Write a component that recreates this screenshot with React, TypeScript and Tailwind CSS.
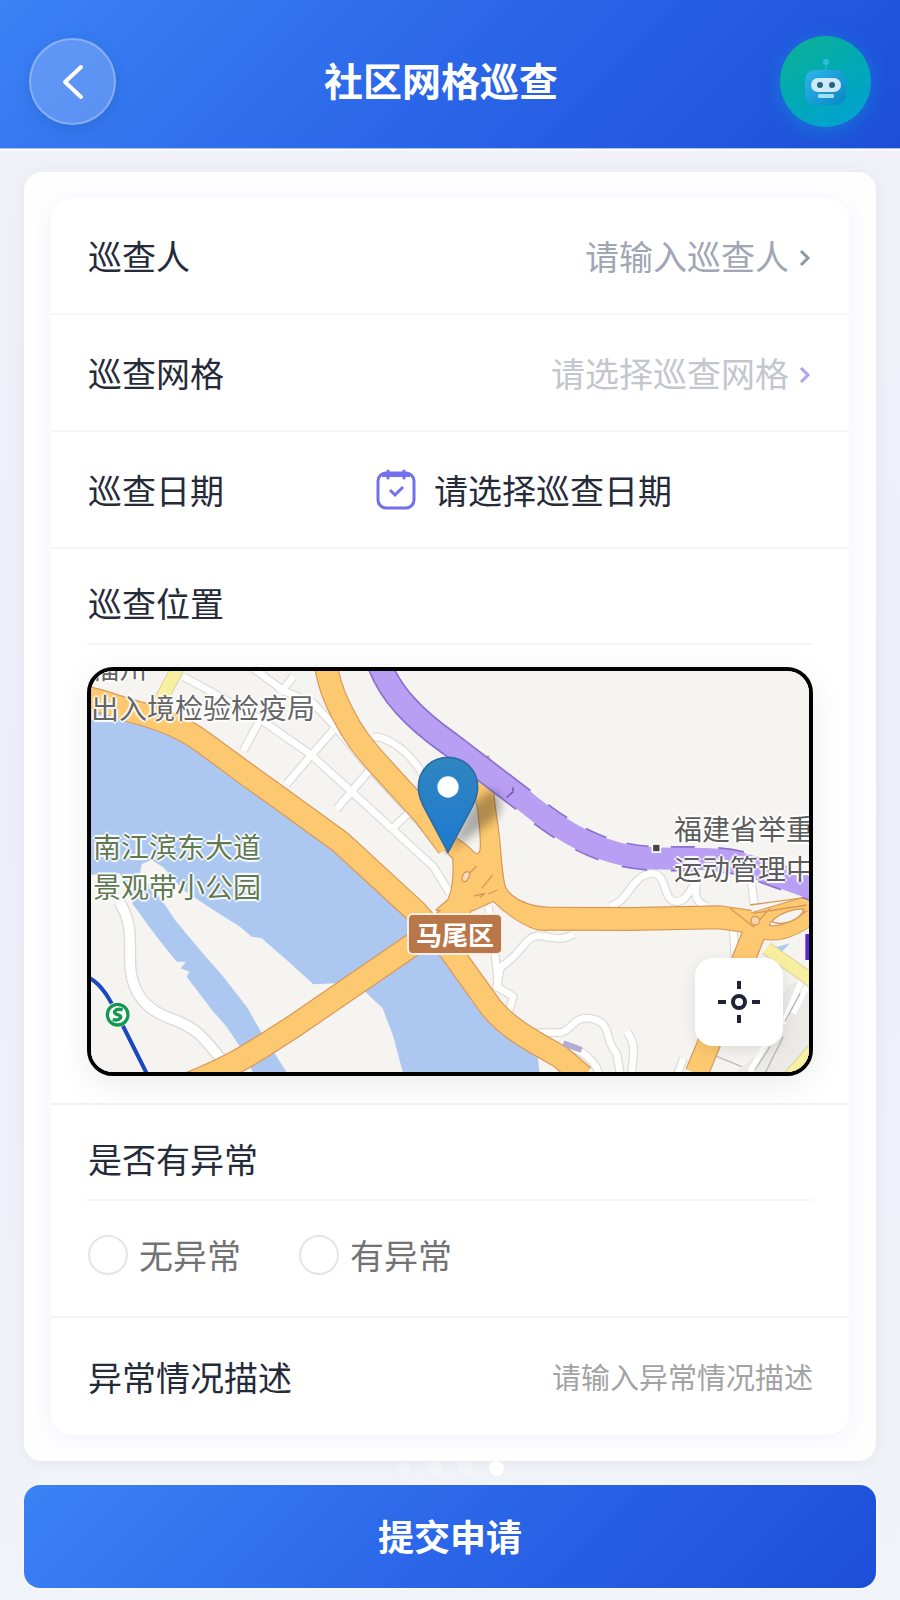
import { ReactNode } from "react";

const Robot = () => (
  <svg viewBox="0 0 46 50" className="h-[50px] w-[46px]" aria-hidden="true">
    <defs>
      <linearGradient id="robotHead" x1="0" y1="0" x2="1" y2="1">
        <stop offset="0" stopColor="#30b4ea" />
        <stop offset="1" stopColor="#0787c4" />
      </linearGradient>
    </defs>
    <path d="M23 6v8" stroke="#22b0d0" strokeWidth="2" />
    <circle cx="23" cy="5" r="3" fill="#2cc0da" />
    <rect x="2" y="13" width="41" height="35" rx="10" fill="url(#robotHead)" />
    <rect x="8" y="21" width="30" height="14" rx="7" fill="#cdeaf9" />
    <circle cx="17" cy="28" r="3" fill="#27627f" />
    <circle cx="29" cy="28" r="3" fill="#27627f" />
    <rect x="15" y="37" width="16" height="4" rx="1" fill="#a5dcf3" />
  </svg>
);

const Calendar = () => (
  <svg viewBox="0 0 42 42" className="size-[42px]" fill="none" stroke="#7370ee" aria-hidden="true">
    <rect x="3" y="4" width="36" height="35" rx="8" strokeWidth="3" />
    <path d="M7 6h28" strokeWidth="4" />
    <path d="M13 2v7M29 2v7" strokeWidth="3" strokeLinecap="round" />
    <path d="M15 21l5 5 8-8" strokeWidth="3" />
  </svg>
);

const Arrow = ({ className }: { className: string }) => (
  <svg viewBox="0 0 12 18" className={`mt-1 mr-0.5 h-[18px] w-3 ${className}`} fill="none" stroke="currentColor" strokeWidth="3" aria-hidden="true">
    <path d="M2 2l7 7-7 7" />
  </svg>
);

const roadA =
  "M10 112C70 122 120 145 180 160C250 180 310 205 355 237C430 290 500 345 570 393L780 545L870 628L1010 757L1110 870L1235 1045C1290 1110 1370 1150 1440 1190L1510 1250";
const roadB = "M330 1270C440 1225 500 1190 570 1145L640 1100L990 860L1100 780L1150 730";
const roadC = "M738 20C748 75 765 120 790 165C820 225 850 262 900 318L1030 460L1105 560";
const roadE = "M1390 776L1650 777L1920 772L2010 785";
const roadF = "M2040 775L1990 900L1850 1240";
const mainRoads = [roadA, roadB, roadC, roadE, roadF];

const junction =
  "M1180 300L1225 290L1240 400C1242 440 1250 470 1255 520C1262 560 1260 620 1274 680C1290 715 1340 740 1400 743V810L1370 807C1330 795 1290 770 1240 722L1180 750H1070L1105 720C1122 680 1122 640 1120 595L1085 560L1110 525C1140 540 1160 555 1180 577Q1196 592 1202 570C1205 540 1200 500 1195 450L1180 380Z";

const streets = [
  "M310 50L530 170L690 282L820 400L940 510L1060 620L1110 700",
  "M520 25L610 92L700 130L770 205L870 325L985 450L1110 580",
  "M640 50L600 100",
  "M540 180L490 272",
  "M760 210L690 290L620 372",
  "M865 335L770 447",
  "M985 460L930 512",
  "M880 230C920 230 990 270 1035 355",
  "M1225 740L1235 800L1250 925L1255 990",
  "M1480 822C1440 850 1400 825 1370 828C1330 835 1320 890 1262 920L1250 980L1300 1010L1285 1060",
  "M1590 740C1650 720 1655 645 1715 640C1765 640 1745 725 1790 725C1830 720 1825 680 1850 675C1840 710 1855 730 1880 740",
  "M2015 665L2022 730",
  "M1960 810L1965 890",
  "M1330 1120L1445 1117C1480 1105 1480 1070 1530 1075C1600 1085 1570 1140 1610 1180L1622 1250",
  "M1640 1115C1675 1160 1655 1190 1655 1250",
  "M1470 1160C1520 1180 1550 1210 1560 1250",
  "M1790 1250L1810 1195",
];

// Drawn at three units to the pixel
const MapDrawing = () => (
  <svg viewBox="33 33 2154 1203" preserveAspectRatio="xMidYMid slice" className="block size-full" aria-hidden="true">
    <defs>
      <linearGradient id="pin" x1="0" y1="0" x2="0" y2="1">
        <stop offset="0" stopColor="#2f86c0" />
        <stop offset="1" stopColor="#1f7ad0" />
      </linearGradient>
      <filter id="soft" x="-30%" y="-30%" width="160%" height="160%">
        <feGaussianBlur stdDeviation="14" />
      </filter>
    </defs>
    <rect width="2300" height="1300" fill="#f5f4f0" />

    {/* river and the islands in it */}
    <path d="M20 120L180 160L355 237L570 393L780 545L1010 757L1130 900L1240 1050L1370 1160L1380 1250H20Z" fill="#adc8f0" />
    <path d="M20 645L120 640L160 735L230 830L290 905L318 905L302 925L328 935L320 950L400 1055L440 1100L480 1160L525 1250H20Z" fill="#f5f4f0" />
    <path d="M180 640L185 612L215 600L250 622L310 690L400 750L480 800L515 830L545 835L620 900L700 973L770 970L850 990L908 1045L940 1130L972 1250H628L540 1110L500 1040L430 950L360 870L285 780L235 705Z" fill="#f5f4f0" />

    {/* blocks at the lower right */}
    <path d="M1950 1250L2060 1160L2120 980L2200 940V1250Z" fill="#ebeae7" />
    <path d="M2010 1235L2075 1120M2110 1090L2165 960M2140 1060L2180 980" fill="none" stroke="#fff" strokeWidth="16" />
    <path d="M2025 1230L2070 1160M1900 1185L1985 1220M2050 1250L2110 1130M2115 1085L2160 1000" fill="none" stroke="#b9b9b9" strokeWidth="4" />
    <path d="M2060 870L2130 850L2100 880Z" fill="#adc8f0" />

    <g fill="none" strokeLinejoin="round">
      {streets.map((d) => (
        <path key={d} d={d} stroke="#dbdad6" strokeWidth="27" />
      ))}
      {streets.map((d) => (
        <path key={d} d={d} stroke="#fff" strokeWidth="20" />
      ))}
      <path d="M118 725C155 785 150 830 150 900C150 1000 200 1050 270 1075C345 1100 370 1130 425 1200" stroke="#dbdad6" strokeWidth="37" />
      <path d="M118 725C155 785 150 830 150 900C150 1000 200 1050 270 1075C345 1100 370 1130 425 1200" stroke="#fff" strokeWidth="29" />
      <path d="M295 20L240 125M2060 865L2200 965M2200 1170L2120 1260" stroke="#d9d2a0" strokeWidth="42" />
      <path d="M295 20L240 125M2060 865L2200 965M2200 1170L2120 1260" stroke="#f8f0a0" strokeWidth="36" />

      {mainRoads.map((d) => (
        <path key={d} d={d} stroke="#d9965a" strokeWidth="72" />
      ))}
      <path d={junction} stroke="#d9965a" strokeWidth="7" />
      <path d="M2000 785L2190 728M2030 810C2080 830 2140 815 2200 765" stroke="#d9965a" strokeWidth="46" />
      {mainRoads.map((d) => (
        <path key={d} d={d} stroke="#fdc970" strokeWidth="65" />
      ))}
      <path d={junction} fill="#fdc970" />
      <path d="M2000 785L2190 728M2030 810C2080 830 2140 815 2200 765" stroke="#fdc970" strokeWidth="40" />
    </g>

    {/* interchanges */}
    <path d="M1170 638L1190 618M1205 685L1238 645M1182 708L1215 700L1200 712M1225 702L1252 690M2010 735L2180 712M2020 760L2180 735M1950 745L2020 800L2070 745" fill="none" stroke="#d9965a" strokeWidth="4" />
    <path d="M1146 660C1146 635 1166 630 1170 640C1168 655 1154 675 1146 660Z" fill="#f7dfc0" stroke="#d9965a" strokeWidth="4" />
    <path d="M2075 785C2100 755 2150 745 2172 748C2160 780 2110 800 2075 785Z" fill="#f5f4f0" stroke="#d9965a" strokeWidth="4" />
    <circle cx="2026" cy="782" r="13" fill="#f6d6a8" stroke="#d9965a" strokeWidth="4" />

    {/* expressway, running into a tunnel */}
    <g fill="none">
      <path d="M897 10C930 100 1000 175 1110 252L1330 420" stroke="#8c70cf" strokeWidth="76" />
      <path d="M1330 420C1450 520 1570 590 1720 595C1830 600 1930 585 2030 625L2210 690" stroke="#8c70cf" strokeWidth="76" strokeDasharray="72 68" strokeDashoffset="72" />
      <path d="M897 10C930 100 1000 175 1110 252L1330 420C1450 520 1570 590 1720 595C1830 600 1930 585 2030 625L2210 690" stroke="#b99ff3" strokeWidth="66" />
      <path d="M1280 412L1300 395M1298 395L1300 382" stroke="#7358b8" strokeWidth="5" />
      <path d="M2183 822V900" stroke="#5a26d8" strokeWidth="14" />
      <path d="M1450 1150L1505 1170" stroke="#b3abd2" strokeWidth="18" />
    </g>

    {/* metro line */}
    <path d="M20 950C70 970 100 1040 120 1080L205 1250" fill="none" stroke="#1a48c0" strokeWidth="12" />
    <circle cx="113" cy="1064" r="38" fill="#fff" />
    <circle cx="113" cy="1064" r="31" fill="#fff" stroke="#12994e" strokeWidth="10" />
    <path d="M128 1049C104 1044 96 1060 113 1064C130 1068 122 1084 98 1079" fill="none" stroke="#12994e" strokeWidth="10" />

    <rect x="1717" y="552" width="24" height="24" fill="#444" stroke="#fff" strokeWidth="5" />

    <path d="M1108 575L1170 440L1230 390C1270 400 1275 450 1240 480Z" fill="#000" opacity=".3" filter="url(#soft)" />
    <path d="M1104 292C1054 292 1015 331 1015 382C1015 410 1026 432 1039 455L1104 577L1169 455C1182 432 1193 410 1193 382C1193 331 1154 292 1104 292Z" fill="url(#pin)" stroke="#2d6da0" strokeWidth="5" />
    <circle cx="1104" cy="381" r="32" fill="#fff" />
  </svg>
);

const halo = "absolute text-[28px] leading-[40px] whitespace-nowrap [text-shadow:-2px_0_1px_#fff,2px_0_1px_#fff,0_-2px_1px_#fff,0_2px_1px_#fff]";

const PatrolMap = () => (
  <div className="relative mt-[22px] h-[409px] overflow-hidden rounded-[26px] border-4 border-black shadow-[0_8px_32px_rgba(0,0,0,0.08)]">
    <MapDrawing />
    <p className={`${halo} -top-6 left-0 text-[#666]`}>
      福州
      <br />
      出入境检验检疫局
    </p>
    <p className={`${halo} top-[155px] left-0.5 text-[#5f7a52]`}>
      南江滨东大道
      <br />
      景观带小公园
    </p>
    <p className={`${halo} top-[137px] left-[583px] text-[#5c5c5c]`}>
      福建省举重
      <br />
      运动管理中心
    </p>
    <span className="absolute top-[242px] left-[316px] rounded-md border-2 border-[#fbeee2] bg-[#b97648] px-[7px] text-[26px] leading-[38px] font-bold text-white">
      马尾区
    </span>
    <button
      type="button"
      aria-label="定位"
      className="absolute right-[26px] bottom-[26px] flex size-[88px] items-center justify-center rounded-[18px] bg-white shadow-[0_4px_16px_rgba(0,0,0,0.1)]"
    >
      <svg viewBox="0 0 44 44" className="size-11" fill="none" stroke="#1e2433" strokeWidth="4">
        <circle cx="22" cy="22" r="6" />
        <path d="M22 1v8M22 35v8M1 22h8M35 22h8" />
      </svg>
    </button>
  </div>
);

const Row = ({ children }: { children: ReactNode }) => (
  <div className="flex h-[117px] items-center border-b-2 border-[#f5f6fb] pr-9 pl-[37px] last:border-b-0">{children}</div>
);

const SectionTitle = ({ children }: { children: ReactNode }) => (
  <h2 className="border-b-2 border-[#f5f6fa] pt-[31px] pb-[17px] pl-px text-[34px] leading-[46px]">{children}</h2>
);

const Choice = ({ label }: { label: string }) => (
  <label className="flex h-10 items-center gap-[11px] text-[34px] leading-10 text-[#737373]">
    <input type="radio" name="abnormal" className="size-10 appearance-none rounded-full border-2 border-[#e5e5e8] bg-white checked:border-[12px] checked:border-[#2563eb]" />
    {label}
  </label>
);

export default function App() {
  return (
    <div className="flex min-h-screen flex-col bg-linear-to-b from-[#f0f2f7] via-[#eceffa] to-[#f0f3f7] font-['Noto_Sans_CJK_SC',sans-serif] text-[#262b3a]">
      <header className="flex items-center border-b border-[#a9c0fa] bg-linear-135 from-[#3b82f6] via-[#2b66e8] via-50% to-[#1d4ed8] px-[29px] pt-9 pb-[21px] shadow-[0_2px_0_#fafcff]">
        <button
          type="button"
          aria-label="返回"
          className="flex size-[87px] items-center justify-center rounded-full border-2 border-white/25 bg-white/20 shadow-[0_4px_16px_rgba(0,0,0,0.1)]"
        >
          <svg viewBox="0 0 22 36" className="h-9 w-[22px]" fill="none" stroke="#fff" strokeWidth="4" strokeLinecap="round" strokeLinejoin="round">
            <path d="M19 3L3 18l16 15" />
          </svg>
        </button>
        <h1 className="flex-1 pr-3.5 pb-1.5 text-center text-[39px] leading-[52px] font-bold text-white">社区网格巡查</h1>
        <button
          type="button"
          aria-label="智能助手"
          className="flex size-[91px] items-center justify-center rounded-full bg-linear-150 from-[#10b090] to-[#08a0d8] shadow-[0_4px_20px_rgba(6,182,212,0.35)]"
        >
          <Robot />
        </button>
      </header>

      <form className="px-6 pt-[23px] pb-3">
        <div className="rounded-[18px] bg-[#fefeff] px-[27px] py-[26px] shadow-[0_2px_16px_rgba(0,0,0,0.05)]">
          <div className="rounded-[22px] bg-white shadow-[0_4px_20px_rgba(99,102,241,0.08)]">
            <Row>
              <label htmlFor="person" className="text-[34px]">巡查人</label>
              <input
                id="person"
                placeholder="请输入巡查人"
                className="mr-2.5 min-w-0 flex-1 text-right text-[34px] outline-none placeholder:text-[#a0a6b4]"
              />
              <Arrow className="text-[#8f96a6]" />
            </Row>
            <Row>
              <label htmlFor="grid" className="text-[34px]">巡查网格</label>
              <select id="grid" className="mr-2.5 min-w-0 flex-1 appearance-none text-right text-[34px] text-[#c3c6cd] outline-none">
                <option>请选择巡查网格</option>
              </select>
              <Arrow className="text-[#a9a6ee]" />
            </Row>
            <Row>
              <label htmlFor="date" className="w-[287px] text-[34px]">巡查日期</label>
              <button id="date" type="button" className="flex items-center gap-[17px] text-[34px]">
                <Calendar />
                请选择巡查日期
              </button>
            </Row>
            <section className="border-b-2 border-[#f1f1fa] px-9 pb-[27px]">
              <SectionTitle>巡查位置</SectionTitle>
              <PatrolMap />
            </section>
            <section className="border-b-2 border-[#f3f5f9] px-9 pb-[41px]">
              <SectionTitle>是否有异常</SectionTitle>
              <div className="flex gap-[58px] pt-[34px] pl-px">
                <Choice label="无异常" />
                <Choice label="有异常" />
              </div>
            </section>
            <Row>
              <label htmlFor="description" className="text-[34px]">异常情况描述</label>
              <input
                id="description"
                placeholder="请输入异常情况描述"
                className="min-w-0 flex-1 text-right text-[29px] outline-none placeholder:text-[#a3a3a3]"
              />
            </Row>
          </div>
        </div>

        <div className="flex h-6 justify-center gap-4">
          <span className="size-[15px] rounded-full bg-white/20" />
          <span className="size-[15px] rounded-full bg-white/25" />
          <span className="size-[15px] rounded-full bg-white/25" />
          <span className="size-[15px] rounded-full bg-white" />
        </div>

        <button
          type="submit"
          className="h-[103px] w-full rounded-2xl bg-linear-135 from-[#3b82f6] via-[#2b66e8] via-50% to-[#1d4ed8] pb-1 text-[36px] font-bold text-white shadow-[0_0_4px_#fff]"
        >
          提交申请
        </button>
      </form>
    </div>
  );
}
